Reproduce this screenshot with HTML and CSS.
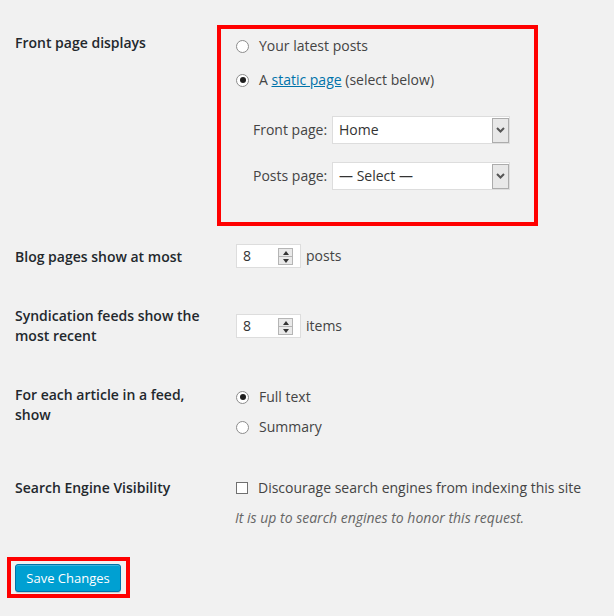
FILE: index.html
```html
<!DOCTYPE html>
<html>
<head>
<meta charset="utf-8">
<link rel="stylesheet" href="styles.css">
</head>
<body>
<div class="page">
  <div class="row row-front">
    <div class="th th-front">Front page displays</div>
    <div class="td">
      <div class="annot">
        <label class="opt"><span class="radio"></span>Your latest posts</label>
        <label class="opt opt-2"><span class="radio checked"></span>A&nbsp;<a href="#">static page</a>&nbsp;(select below)</label>
        <div class="sel-row sel-row-1">
          <span class="sel-label">Front page:</span>
          <div class="select"><span class="sel-text">Home</span><span class="sel-btn"><svg width="9" height="6" viewBox="0 0 9 6"><path d="M1 1 L4.5 4.5 L8 1" fill="none" stroke="#555" stroke-width="2"/></svg></span></div>
        </div>
        <div class="sel-row sel-row-2">
          <span class="sel-label">Posts page:</span>
          <div class="select"><span class="sel-text">— Select —</span><span class="sel-btn"><svg width="9" height="6" viewBox="0 0 9 6"><path d="M1 1 L4.5 4.5 L8 1" fill="none" stroke="#555" stroke-width="2"/></svg></span></div>
        </div>
      </div>
    </div>
  </div>

  <div class="row row-blog">
    <div class="th th-blog">Blog pages show at most</div>
    <div class="td td-in td-num">
      <div class="num"><span class="num-val">8</span><span class="spin"><span class="spin-up"></span><span class="spin-down"></span></span></div>
      <span class="unit">posts</span>
    </div>
  </div>

  <div class="row row-synd">
    <div class="th">Syndication feeds show the most recent</div>
    <div class="td td-in td-num td-synd">
      <div class="num"><span class="num-val">8</span><span class="spin"><span class="spin-up"></span><span class="spin-down"></span></span></div>
      <span class="unit">items</span>
    </div>
  </div>

  <div class="row row-feed">
    <div class="th">For each article in a feed, show</div>
    <div class="td td-in td-plain">
      <label class="opt"><span class="radio checked"></span>Full text</label>
      <label class="opt opt-sum"><span class="radio"></span>Summary</label>
    </div>
  </div>

  <div class="row row-search">
    <div class="th">Search Engine Visibility</div>
    <div class="td td-in td-plain">
      <label class="opt"><span class="check"></span>Discourage search engines from indexing this site</label>
      <p class="desc">It is up to search engines to honor this request.</p>
    </div>
  </div>

  <div class="submit">
    <button class="btn">Save Changes</button>
  </div>
</div>
</body>
</html>
```
FILE: styles.css
```css
html, body {
  margin: 0;
  padding: 0;
  background: #f1f1f1;
}
body {
  font-family: "Open Sans", "Liberation Sans", sans-serif;
  font-size: 14px;
  line-height: 20px;
  color: #444;
}
.page {
  padding: 25px 0 0 15px;
}
.row {
  display: grid;
  grid-template-columns: 202px 1fr;
}
.th {
  color: #23282d;
  font-weight: 600;
  width: 190px;
}
.th-front { padding-top: 8px; }
.td-in { padding-left: 19px; }
.annot {
  width: 298px;
  border: 4px solid #ff0000;
  padding: 7px 0 32px 15px;
}
.opt {
  display: flex;
  align-items: center;
  height: 20px;
}
.opt-2 { margin-top: 14px; }
a {
  color: #0073aa;
  text-decoration: underline;
}
.radio {
  width: 11px;
  height: 11px;
  border: 1px solid #8c8c8c;
  border-radius: 50%;
  background: #fff;
  margin-right: 10px;
  position: relative;
  flex: none;
}
.radio.checked::after {
  content: "";
  position: absolute;
  left: 2.5px;
  top: 2.5px;
  width: 6px;
  height: 6px;
  border-radius: 50%;
  background: #1e1e1e;
}
.check {
  width: 10px;
  height: 10px;
  border: 1.5px solid #707070;
  background: #fff;
  margin-right: 10px;
  flex: none;
}
.sel-row {
  display: flex;
  align-items: center;
  padding-left: 17px;
}
.sel-row-1 { margin-top: 26px; }
.sel-row-2 { margin-top: 18px; }
.sel-label {
  width: 79px;
  flex: none;
}
.select {
  width: 176px;
  height: 26px;
  border: 1px solid #ddd;
  background: #fff;
  display: flex;
  align-items: center;
  justify-content: space-between;
  color: #333;
}
.sel-text { padding-left: 6px; }
.sel-btn {
  width: 15px;
  height: 23px;
  border: 1px solid #acacac;
  background: #e8e8e8;
  display: flex;
  align-items: center;
  justify-content: center;
  margin-right: 0;
}
.row-blog { margin-top: 18px; }
.th-blog { padding-top: 3px; }
.td-num {
  display: flex;
  align-items: flex-start;
}
.td-synd { padding-top: 8px; }
.num {
  width: 63px;
  height: 22px;
  border: 1px solid #ddd;
  background: #fff;
  display: flex;
  align-items: center;
  justify-content: space-between;
  color: #333;
}
.num-val { padding-left: 6px; }
.spin {
  width: 13px;
  height: 15px;
  border: 1px solid #b5b5b5;
  background: #e9e9e9;
  margin-right: 7px;
  display: flex;
  flex-direction: column;
}
.spin-up, .spin-down {
  flex: 1;
  position: relative;
}
.spin-up { border-bottom: 1px solid #b5b5b5; }
.spin-up::after, .spin-down::after {
  content: "";
  position: absolute;
  left: 3.5px;
  width: 0;
  height: 0;
  border-left: 3px solid transparent;
  border-right: 3px solid transparent;
}
.spin-up::after {
  top: 2px;
  border-bottom: 4px solid #333;
}
.spin-down::after {
  top: 2px;
  border-top: 4px solid #333;
}
.unit {
  margin-left: 5px;
  line-height: 24px;
}
.row-synd { margin-top: 38px; }
.row-feed { margin-top: 39px; }
.td-plain { padding-top: 2px; }
.opt-sum { margin-top: 10px; }
.row-search { margin-top: 41px; }
.row-search .td-plain { padding-top: 0; }
.desc {
  margin: 10px 0 0 -1px;
  font-style: italic;
  font-size: 14px;
  color: #666;
}
.submit {
  margin: 29px 0 0 -8px;
  display: inline-block;
  border: 4px solid #ff0000;
  padding: 3px 5px 2px 4px;
}
.btn {
  display: block;
  width: 106px;
  height: 28px;
  background: #00a0d2;
  border: 1px solid #0073aa;
  border-radius: 3px;
  box-shadow: inset 0 1px 0 rgba(120,200,230,.5), 0 1px 0 rgba(0,0,0,.15);
  color: #fff;
  font-family: "Open Sans", "Liberation Sans", sans-serif;
  font-size: 13px;
  padding: 0;
}
```
